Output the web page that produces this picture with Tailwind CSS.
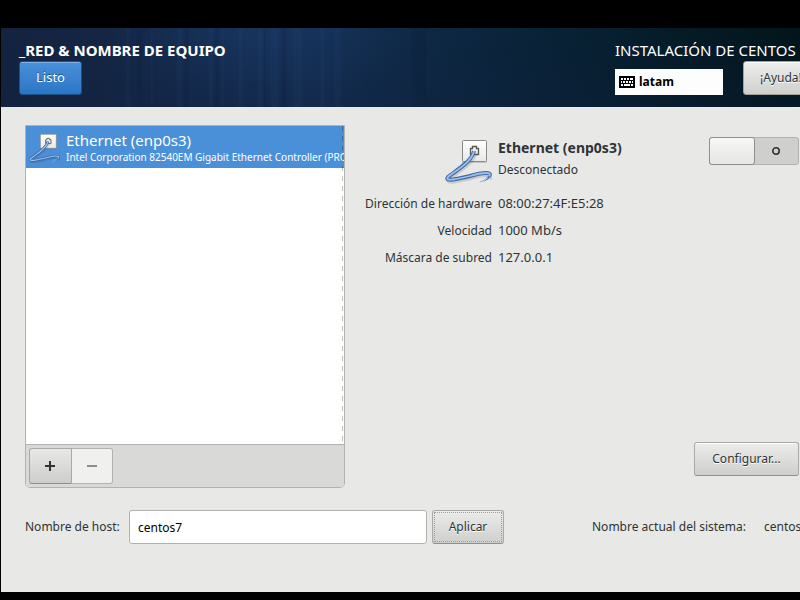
<!DOCTYPE html>
<html lang="es">
<head>
<meta charset="utf-8">
<meta name="viewport" content="width=device-width, initial-scale=1">
<title>Red y nombre de equipo</title>
<script src="https://cdn.jsdelivr.net/npm/@tailwindcss/browser@4"></script>
</head>
<body class="flex min-h-screen flex-col overflow-x-hidden bg-black pt-7 pb-2 pl-px font-['Noto_Sans','Open_Sans',sans-serif] text-xs text-[#2e3436]">
<svg class="absolute size-0" aria-hidden="true">
  <defs>
    <linearGradient id="plate" x1="0" y1="0" x2="0" y2="1"><stop offset="0" stop-color="#fff"/><stop offset="1" stop-color="#e8e8e6"/></linearGradient>
  </defs>
  <symbol id="wired" viewBox="0 0 48 48">
    <path d="M18 4h25v22H18z" fill="#000" opacity=".15"/>
    <rect x="18.500" y="3.500" width="24" height="21" rx="1" fill="url(#plate)" stroke="#888a85"/>
    <path d="M26.500 17.500v-6h2v-2h4v2h2v6z" fill="#eee" stroke="#555753" stroke-width="1.300"/>
    <path d="M30 15C28 25 11 34 4 40c-4 5 10 2 22-1 13-4 23-4 19 1" transform="translate(1 2)" fill="none" stroke="#000" stroke-opacity=".12" stroke-width="4"/>
    <path d="M30 14C28 25 11 34 4 40c-4 5 10 2 22-1 13-4 23-4 19 0" fill="none" stroke="#3f6ca8" stroke-width="4" stroke-linejoin="round"/>
    <path d="M46.500 38c1 3-3 5-8 7 3-2 6-4 5-6z" fill="#4f7fbd"/>
    <path d="M43 40c-1 2-4 4-7 5" fill="none" stroke="#8fb0da" stroke-width="1"/>
    <path d="M30 14C28 25 11 34 4 40c-4 5 10 2 22-1 13-4 23-4 19 0" fill="none" stroke="#9dbfe6" stroke-width="1.800" stroke-linejoin="round"/>
  </symbol>
</svg>

<header class="relative flex h-[79px] items-start justify-between overflow-hidden bg-linear-to-r from-[#14233f] via-[#132e50] via-40% to-[#02151a] pt-3 pl-[18px] text-white">
  <svg class="absolute inset-0 size-full" viewBox="0 0 800 79" preserveAspectRatio="none" aria-hidden="true">
    <defs>
      <radialGradient id="glow"><stop offset="0" stop-color="#1d3f74" stop-opacity=".45"/><stop offset="1" stop-color="#1d3f74" stop-opacity="0"/></radialGradient>
      <linearGradient id="fall" x1="0" y1="0" x2="0" y2="1"><stop offset="0" stop-color="#0c1c3c" stop-opacity="0"/><stop offset="1" stop-color="#101f40" stop-opacity=".3"/></linearGradient>
    </defs>
    <ellipse cx="255" cy="10" rx="150" ry="80" fill="url(#glow)"/>
    <rect width="800" height="79" fill="url(#fall)"/>
    <g fill="#284b7c" opacity=".12">
      <rect x="125" width="4" height="79"/><rect x="150" width="2" height="79"/><rect x="176" width="5" height="79"/><rect x="208" width="4" height="79"/><rect x="221" width="2" height="79"/><rect x="238" width="4" height="79"/><rect x="257" width="5" height="79"/><rect x="270" width="8" height="79"/><rect x="293" width="9" height="79"/><rect x="320" width="4" height="79"/><rect x="334" width="6" height="79"/>
    </g>
    <g fill="#0c1c3c" opacity=".18">
      <rect x="136" width="6" height="79"/><rect x="184" width="4" height="79"/><rect x="214" width="4" height="79"/><rect x="263" width="2" height="79"/><rect x="281" width="5" height="79"/><rect x="411" width="15" height="79"/>
    </g>
  </svg>
  <div class="relative">
    <h1 class="text-[15px] leading-[21px] font-bold">_RED &amp; NOMBRE DE EQUIPO</h1>
    <button class="h-[34px] w-[63px] rounded-[3px] border border-[#1c5187] bg-linear-to-b from-[#4a90d9] to-[#2a76c6] text-[13px] text-white shadow-[inset_0_1px_#7fb2e8] text-shadow-[0_-1px_#1c5187]">Listo</button>
  </div>
  <div class="relative w-[185px] shrink-0 whitespace-nowrap">
    <p class="text-[15px] leading-[21px]">INSTALACIÓN DE CENTOS 7</p>
    <div class="flex items-end gap-5">
      <button class="flex h-[26px] w-[108px] shrink-0 items-center gap-1 bg-[#fdfdfd] px-1 text-xs font-bold text-black">
        <svg width="16" height="12" viewBox="0 0 16 12" aria-hidden="true"><path d="M0 0h16v12H0z"/><path d="M2 2h2v2H2zm3 0h2v2H5zm3 0h2v2H8zm3 0h3v2h-3zM2 5h1v2H2zm2 0h2v2H4zm3 0h2v2H7zm3 0h2v2h-2zm3 0h1v2h-1zM2 8h2v2H2zm3 0h6v2H5zm7 0h2v2h-2z" fill="#fff"/></svg>
        latam
      </button>
      <button class="h-[34px] shrink-0 rounded-[3px] border border-[#a1a19d] bg-linear-to-b from-[#eeeeec] to-[#cfcfcd] px-4 text-xs text-[#2e3436] shadow-[inset_0_1px_#fff] text-shadow-[0_1px_#fff]">¡Ayuda!</button>
    </div>
  </div>
</header>

<main class="flex flex-1 flex-col gap-[22px] overflow-hidden bg-[#e8e8e6] pt-[18px] pb-12 pl-6">
  <div class="flex flex-1 gap-[18px]">
    <section class="flex w-80 shrink-0 flex-col overflow-hidden rounded-b-[5px] border border-[#b2b2ae] bg-white" aria-label="Dispositivos de red">
      <ul class="relative flex-1">
        <li class="flex h-[42px] items-center gap-1.5 overflow-hidden bg-[#4a90d9] pt-px pl-0.5 whitespace-nowrap text-white">
          <svg class="size-8 shrink-0" aria-hidden="true"><use href="#wired"/></svg>
          <div>
            <p class="text-[15px] leading-[18px]">Ethernet (enp0s3)</p>
            <p class="text-[10px] leading-4">Intel Corporation 82540EM Gigabit Ethernet Controller (PRO/1000 MT)</p>
          </div>
        </li>
        <li class="absolute inset-y-0 right-px w-px bg-[repeating-linear-gradient(to_bottom,#00000040_0_5px,transparent_5px_10px)]" role="presentation"></li>
      </ul>
      <div class="flex h-[43px] items-start border-t border-[#b2b2ae] bg-[#d9d9d7] p-[3px]">
        <button class="flex h-9 w-[43px] items-center justify-center rounded-l-[3px] border border-[#a9a9a5] border-b-[#8f8f8b] bg-linear-to-b from-[#e8e8e6] to-[#cdcdcb]" aria-label="Añadir">
          <svg width="11" height="10" viewBox="0 0 11 10" aria-hidden="true"><path d="M5 0v10M0 5h10" stroke="#2e3436" stroke-width="2"/></svg>
        </button>
        <button class="flex h-9 w-[41px] items-center justify-center rounded-r-[3px] border border-l-0 border-[#b2b2ae] bg-[#f0f0ef]" aria-label="Quitar" disabled>
          <svg width="10" height="10" viewBox="0 0 10 10" aria-hidden="true"><path d="M0 5h10" stroke="#8b8e8f" stroke-width="2"/></svg>
        </button>
      </div>
    </section>

    <section class="flex min-w-0 flex-1 flex-col pt-3 pr-px pb-3">
      <div class="flex items-start justify-between">
        <div class="grid grid-cols-[129px_1fr] gap-x-[6px]">
          <svg class="size-12 justify-self-end" aria-hidden="true"><use href="#wired"/></svg>
          <div>
            <h2 class="text-sm leading-[22px] font-bold whitespace-nowrap">Ethernet (enp0s3)</h2>
            <p class="leading-[22px]">Desconectado</p>
          </div>
        </div>
        <button class="flex h-7 w-[90px] shrink-0 rounded-[3px] border border-[#b2b2ae] bg-[#cfcfcd]" role="switch" aria-checked="false" aria-label="Ethernet">
          <span class="-m-px h-7 w-[46px] rounded-[3px] border border-[#8f8f8b] bg-linear-to-b from-[#f7f7f7] to-[#e6e6e4]"></span>
          <span class="flex flex-1 items-center justify-center self-stretch"><svg width="8" height="8" viewBox="0 0 8 8" aria-hidden="true"><circle cx="4" cy="4" r="3.200" fill="none" stroke="#2e3436" stroke-width="1.600"/></svg></span>
        </button>
      </div>
      <dl class="mt-[5px] grid grid-cols-[129px_1fr] gap-x-[6px] leading-[27px] whitespace-nowrap">
        <dt class="text-right">Dirección de hardware</dt><dd class="text-[13px]">08:00:27:4F:E5:28</dd>
        <dt class="text-right">Velocidad</dt><dd class="text-[13px]">1000 Mb/s</dd>
        <dt class="text-right">Máscara de subred</dt><dd class="text-[13px]">127.0.0.1</dd>
      </dl>
      <button class="mt-auto h-[34px] w-[105px] self-end rounded-[3px] border border-[#a9a9a5] border-b-[#8f8f8b] bg-linear-to-b from-[#ececea] to-[#cfcfcd] shadow-[inset_0_1px_#fff] text-shadow-[0_1px_#fff]">Configurar...</button>
    </section>
  </div>

  <form class="flex items-center whitespace-nowrap">
    <label for="host" class="w-[104px] shrink-0">Nombre de host:</label>
    <input id="host" type="text" value="centos7" class="h-[34px] w-[298px] shrink-0 rounded-[3px] border border-[#b2b2ae] bg-white px-2 text-xs text-black">
    <button type="button" class="ml-[5px] h-[34px] w-[72px] shrink-0 rounded-[3px] border border-[#a9a9a5] border-b-[#8f8f8b] bg-linear-to-b from-[#ececea] to-[#cfcfcd] p-px text-shadow-[0_1px_#fff]"><span class="flex h-full items-center justify-center border border-dotted border-[#9c9c99]">Aplicar</span></button>
    <div class="ml-auto flex w-[208px] shrink-0 gap-4">
      <span class="w-[156px] shrink-0">Nombre actual del sistema:</span>
      <span>centos7</span>
    </div>
  </form>
</main>
</body>
</html>
